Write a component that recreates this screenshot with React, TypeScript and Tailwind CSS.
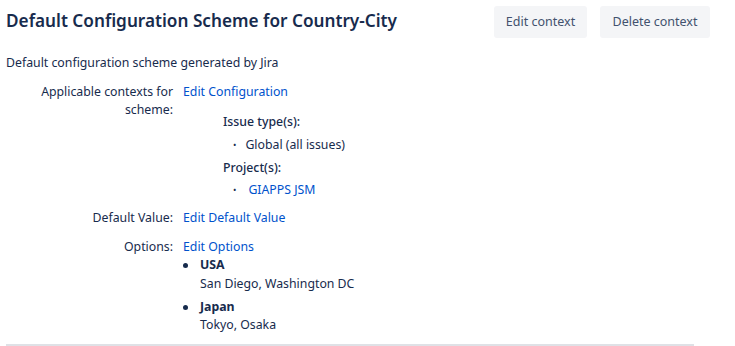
import React from "react";

const font = { fontFamily: '"Noto Sans", "Open Sans", sans-serif' };

function Row({ label, children, className = "" }: { label: React.ReactNode; children: React.ReactNode; className?: string }) {
  return (
    <div className={`grid grid-cols-[167px_1fr] gap-x-[10px] ${className}`}>
      <div className="text-right leading-[18px]">{label}</div>
      <div className="leading-[18px]">{children}</div>
    </div>
  );
}

export default function App() {
  return (
    <div className="w-[735px] h-[346px] bg-white text-[#172b4d] text-[12.3px] overflow-hidden" style={font}>
      <div className="pl-[6px] pr-[25px]">
        {/* header */}
        <div className="flex items-start justify-between pt-[6px]">
          <h1 className="text-[17.2px] font-semibold leading-[28px] pt-[1px]">Default Configuration Scheme for Country-City</h1>
          <div className="flex gap-[13px]">
            <button className="h-[32px] w-[93px] rounded-[3px] bg-[#f4f5f7] text-[#42526e] text-[12.5px]">Edit context</button>
            <button className="h-[32px] w-[110px] rounded-[3px] bg-[#f4f5f7] text-[#42526e] text-[12.5px]">Delete context</button>
          </div>
        </div>

        <p className="mt-[16px] leading-[18px]">Default configuration scheme generated by Jira</p>

        <div className="mt-[11px] flex flex-col">
          <Row label={<>Applicable contexts for<br />scheme:</>}>
            <a className="text-[#0052cc]">Edit Configuration</a>
            <div className="pl-[40px]">
              <div className="mt-[12px] font-medium">Issue type(s):</div>
              <ul className="mt-[5px] pl-[10px]">
                <li className="flex items-center gap-[9px]"><span className="text-[9px]">•</span>Global (all issues)</li>
              </ul>
              <div className="mt-[5px] font-medium">Project(s):</div>
              <ul className="mt-[4px] pl-[10px]">
                <li className="flex items-center gap-[12px]"><span className="text-[9px]">•</span><a className="text-[#0052cc]">GIAPPS JSM</a></li>
              </ul>
            </div>
          </Row>

          <Row label="Default Value:" className="mt-[10px]">
            <a className="text-[#0052cc]">Edit Default Value</a>
          </Row>

          <Row label="Options:" className="mt-[11px]">
            <a className="text-[#0052cc]">Edit Options</a>
            <ul>
              <li className="flex gap-[12px]">
                <span className="w-[5px] h-[5px] rounded-full bg-[#172b4d] mt-[7px] shrink-0" />
                <div>
                  <div className="font-bold">USA</div>
                  <div className="mt-[1px]">San Diego, Washington DC</div>
                </div>
              </li>
              <li className="flex gap-[12px] mt-[5px]">
                <span className="w-[5px] h-[5px] rounded-full bg-[#172b4d] mt-[7px] shrink-0" />
                <div>
                  <div className="font-bold">Japan</div>
                  <div>Tokyo, Osaka</div>
                </div>
              </li>
            </ul>
          </Row>
        </div>

        <div className="mt-[10px] h-[2px] w-[688px] bg-[#dfe1e6]" />
      </div>
    </div>
  );
}
